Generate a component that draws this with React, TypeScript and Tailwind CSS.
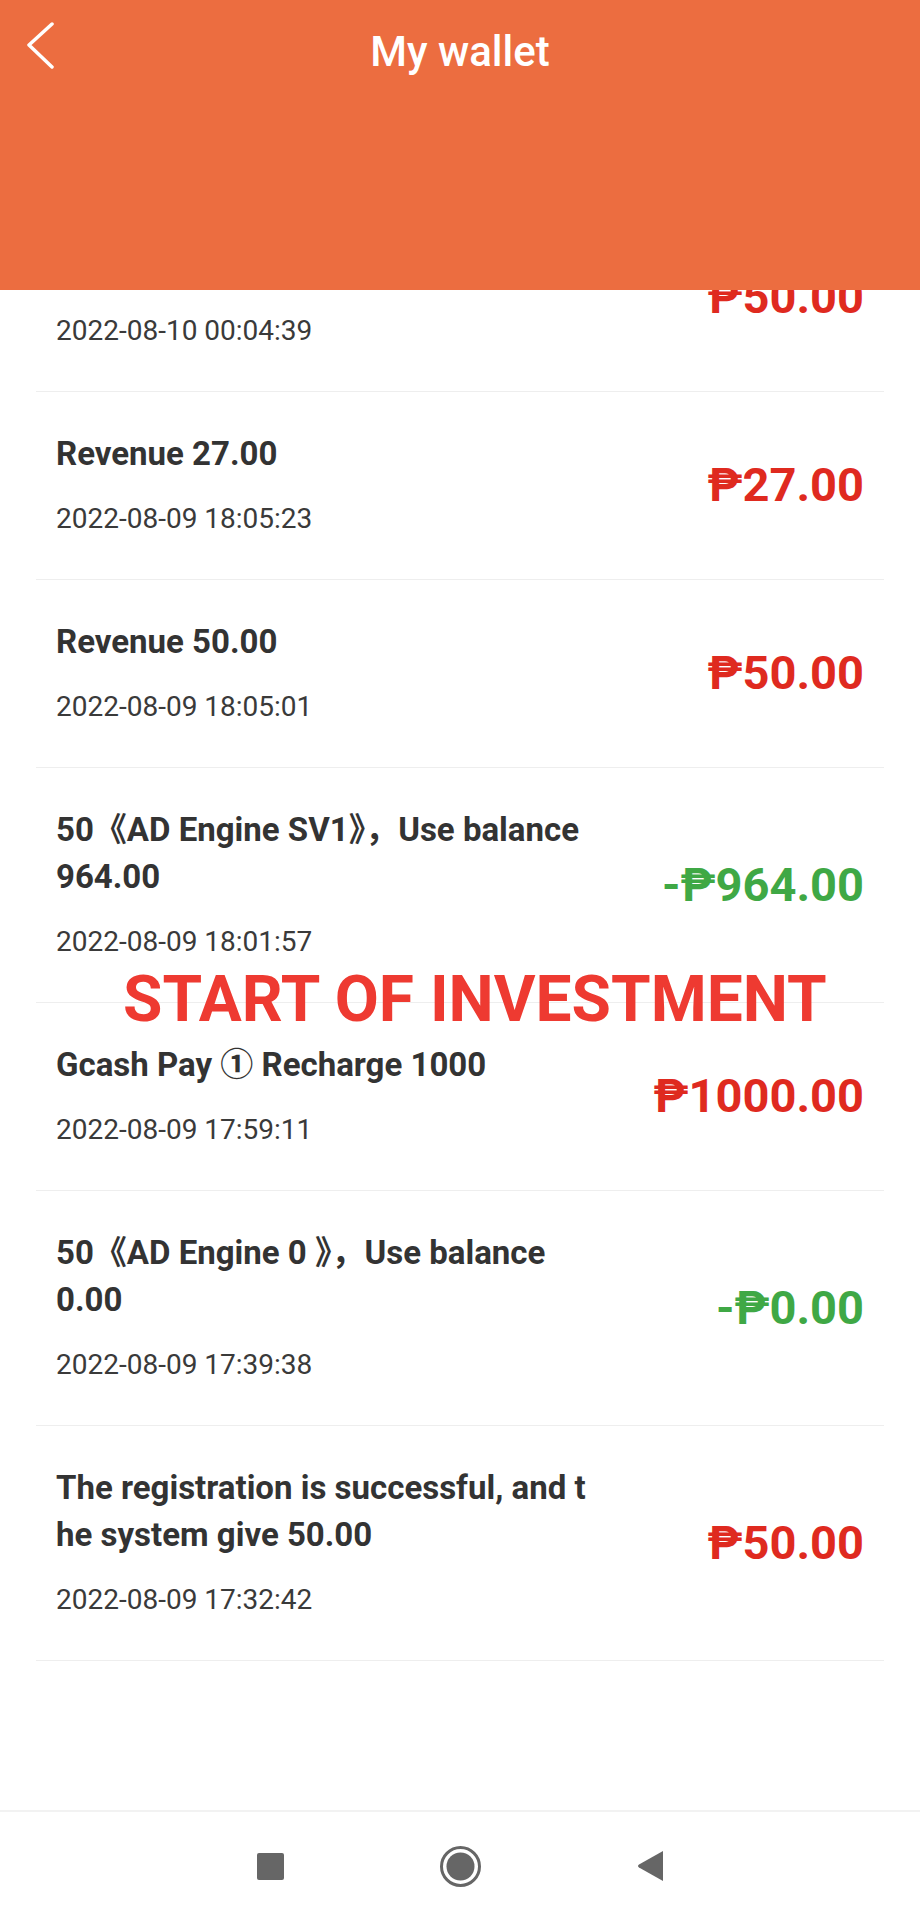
import React from "react";

type Entry = {
  title: string[];
  date: string;
  amount: string;
  tone: "in" | "out";
};

// title lines are kept as the app wraps them
const entries: Entry[] = [
  { title: ["Revenue 50.00"], date: "2022-08-10 00:04:39", amount: "₱50.00", tone: "in" },
  { title: ["Revenue 27.00"], date: "2022-08-09 18:05:23", amount: "₱27.00", tone: "in" },
  { title: ["Revenue 50.00"], date: "2022-08-09 18:05:01", amount: "₱50.00", tone: "in" },
  {
    title: ["50《AD Engine SV1》，Use balance", "964.00"],
    date: "2022-08-09 18:01:57",
    amount: "-₱964.00",
    tone: "out",
  },
  { title: ["Gcash Pay ① Recharge 1000"], date: "2022-08-09 17:59:11", amount: "₱1000.00", tone: "in" },
  {
    title: ["50《AD Engine 0 》，Use balance", "0.00"],
    date: "2022-08-09 17:39:38",
    amount: "-₱0.00",
    tone: "out",
  },
  {
    title: ["The registration is successful, and t", "he system give 50.00"],
    date: "2022-08-09 17:32:42",
    amount: "₱50.00",
    tone: "in",
  },
];

const Row = ({ entry }: { entry: Entry }) => (
  <div className="flex items-center justify-between border-b border-[#eeeeee] px-[20px] pt-[38px] pb-[40px]">
    <div className="w-[560px]">
      {entry.title.map((line, i) => (
        <div key={i} className="text-[33px] leading-[47px] font-bold text-[#333333] whitespace-nowrap">
          {line}
        </div>
      ))}
      <div className="mt-[22px] text-[28px] leading-[40px] text-[#3a3a3a]">{entry.date}</div>
    </div>
    <div
      className={`text-[47px] leading-none font-bold whitespace-nowrap ${
        entry.tone === "in" ? "text-[#df2a1f]" : "text-[#3fa845]"
      }`}
    >
      {entry.amount}
    </div>
  </div>
);

export default function App() {
  return (
    <div
      className="w-[920px] h-[1920px] flex flex-col bg-white overflow-hidden"
      style={{ fontFamily: 'Roboto, "Noto Sans CJK SC", sans-serif' }}
    >
      <header className="h-[290px] shrink-0 bg-[#ec6d40] relative z-10">
        <div className="h-[102px] grid grid-cols-[100px_1fr_100px] items-center">
          <div className="pl-[26px] pb-[8px]">
            <svg width="30" height="50" viewBox="0 0 30 50" fill="none">
              <path
                d="M26 2 L3 23 L26 45"
                stroke="#ffffff"
                strokeWidth="3.5"
                strokeLinecap="round"
                strokeLinejoin="round"
              />
            </svg>
          </div>
          <h1 className="text-center text-white text-[42px] font-medium">My wallet</h1>
          <div />
        </div>
      </header>

      <main className="flex-1 overflow-hidden relative">
        <div className="mx-[36px] -mt-[86px]">
          {entries.map((e, i) => (
            <Row key={i} entry={e} />
          ))}
        </div>

        <div className="absolute left-[123px] top-[678px] text-[64px] leading-none font-bold text-[#ee3a31] whitespace-nowrap">
          START OF INVESTMENT
        </div>
      </main>

      <nav className="h-[110px] shrink-0 border-t-2 border-[#f2f2f2] flex items-center justify-center gap-[156px]">
        <div className="w-[27px] h-[27px] rounded-[2px] bg-[#666666]" />
        <svg width="41" height="41" viewBox="0 0 41 41">
          <circle cx="20.5" cy="20.5" r="19" fill="none" stroke="#666666" strokeWidth="3" />
          <circle cx="20.5" cy="20.5" r="14" fill="#666666" />
        </svg>
        <svg width="26" height="30" viewBox="0 0 26 30">
          <path d="M26 0 L26 30 L2 16.5 Q0 15 2 13.5 Z" fill="#666666" />
        </svg>
      </nav>
    </div>
  );
}
